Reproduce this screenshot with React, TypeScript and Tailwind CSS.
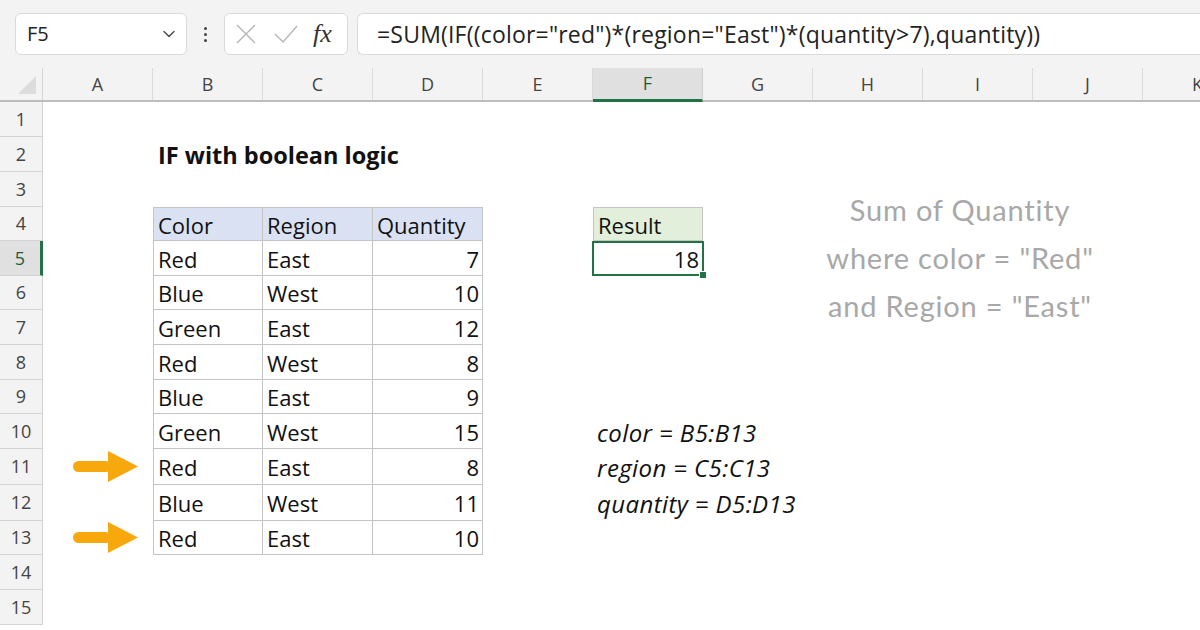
import React from "react";
import { ChevronDown } from "lucide-react";

const COLS = ["A", "B", "C", "D", "E", "F", "G", "H", "I", "J", "K"];

// row heights in px, rows 1..15
const ROW_H: Record<number, string> = {
  1: "h-[35px]",
  2: "h-[35px]",
  3: "h-[35px]",
  4: "h-[34px]",
  5: "h-[35px]",
  6: "h-[34px]",
  7: "h-[35px]",
  8: "h-[35px]",
  9: "h-[34px]",
  10: "h-[35px]",
  11: "h-[36px]",
  12: "h-[36px]",
  13: "h-[34px]",
  14: "h-[35px]",
  15: "h-[35px]",
};

const DATA: [string, string, number][] = [
  ["Red", "East", 7],
  ["Blue", "West", 10],
  ["Green", "East", 12],
  ["Red", "West", 8],
  ["Blue", "East", 9],
  ["Green", "West", 15],
  ["Red", "East", 8],
  ["Blue", "West", 11],
  ["Red", "East", 10],
];

const NOTES: Record<number, string> = {
  10: "color = B5:B13",
  11: "region = C5:C13",
  12: "quantity = D5:D13",
};

function Arrow() {
  return (
    <svg width="66" height="32" viewBox="0 0 66 32" aria-hidden>
      <rect x="0" y="10" width="38" height="11" rx="5.5" fill="#f7a80d" />
      <polygon points="35,0 65,15.5 35,31" fill="#f7a80d" />
    </svg>
  );
}

function Toolbar() {
  return (
    <div className="flex h-[68px] shrink-0 items-center gap-0 bg-[#f3f3f3] pl-[15px]">
      <div className="flex h-[42px] w-[172px] items-center justify-between rounded-md border border-[#dadada] bg-white pl-[11px] pr-[7px]">
        <span className="text-[20px] text-[#222]">F5</span>
        <ChevronDown className="h-5 w-5 text-[#444]" strokeWidth={1.6} />
      </div>
      <div className="flex w-[37px] flex-col items-center gap-[3px]">
        <span className="h-[3px] w-[3px] rounded-full bg-[#444]" />
        <span className="h-[3px] w-[3px] rounded-full bg-[#444]" />
        <span className="h-[3px] w-[3px] rounded-full bg-[#444]" />
      </div>
      <div className="flex h-[42px] w-[124px] items-center rounded-md border border-[#dadada] bg-white">
        <svg width="22" height="22" viewBox="0 0 22 22" className="ml-[10px]" aria-hidden>
          <path d="M2 2 L20 20 M20 2 L2 20" stroke="#b8b8b8" strokeWidth="1.5" fill="none" />
        </svg>
        <svg width="26" height="22" viewBox="0 0 26 22" className="ml-[16px]" aria-hidden>
          <path d="M2 11 L10 19 L24 3" stroke="#b8b8b8" strokeWidth="1.5" fill="none" />
        </svg>
        <span className="ml-[14px] font-['Liberation_Serif',serif] text-[26px] italic leading-none text-[#333]">
          fx
        </span>
      </div>
      <div className="ml-[9px] flex h-[42px] flex-1 items-center rounded-l-md border border-r-0 border-[#dadada] bg-white pl-[19px]">
        <span className="whitespace-nowrap pt-[1px] text-[23px] tracking-[0.2px] text-[#222]">
          =SUM(IF((color="red")*(region="East")*(quantity&gt;7),quantity))
        </span>
      </div>
    </div>
  );
}

function ColumnHeader() {
  return (
    <div className="flex h-[34px] shrink-0 border-b-2 border-[#bdbdbd] bg-[#f3f3f3]">
      <div className="relative w-[43px] shrink-0 border-r border-[#d4d4d4]">
        <svg width="20" height="20" viewBox="0 0 20 20" className="absolute bottom-[5px] right-[5px]" aria-hidden>
          <polygon points="19,1 19,19 1,19" fill="#dcdcdc" />
        </svg>
      </div>
      {COLS.map((c) => (
        <div
          key={c}
          className={
            c === "F"
              ? "-mb-[2px] flex w-[110px] shrink-0 items-center justify-center border-b-[3px] border-r border-r-[#cfcfcf] border-b-[#217346] bg-[#e0e0e0] text-[18px] text-[#1d5e38]"
              : "flex w-[110px] shrink-0 items-center justify-center border-r border-[#dadada] text-[18px] text-[#444]"
          }
        >
          {c}
        </div>
      ))}
    </div>
  );
}

function cellContent(row: number, col: string): React.ReactNode {
  if (row === 2 && col === "B")
    return <span className="whitespace-nowrap pl-[5px] text-[23.5px] font-bold text-[#111]">IF with boolean logic</span>;
  if (row === 4) {
    if (col === "B") return <span className="pl-[4px]">Color</span>;
    if (col === "C") return <span className="pl-[4px]">Region</span>;
    if (col === "D") return <span className="pl-[4px]">Quantity</span>;
    if (col === "F") return <span className="pl-[4px]">Result</span>;
  }
  if (row >= 5 && row <= 13) {
    const d = DATA[row - 5];
    if (col === "B") return <span className="pl-[4px]">{d[0]}</span>;
    if (col === "C") return <span className="pl-[4px]">{d[1]}</span>;
    if (col === "D") return <span className="ml-auto pr-[3px]">{d[2]}</span>;
    if (col === "A" && (row === 11 || row === 13))
      return (
        <span className="-mt-[2px] pl-[30px]">
          <Arrow />
        </span>
      );
  }
  if (row === 5 && col === "F") return <span className="ml-auto pr-[3px]">18</span>;
  if (NOTES[row] && col === "F")
    return <span className="whitespace-nowrap pl-[4px] text-[24px] italic tracking-[0.4px]">{NOTES[row]}</span>;
  return null;
}

function cellClass(row: number, col: string): string {
  const base = "flex w-[110px] shrink-0 items-center pt-[2px]";
  const inTable = row >= 4 && row <= 13 && (col === "B" || col === "C" || col === "D");
  if (inTable) {
    let cls = base + " border-b border-r border-[#c4c4c4]";
    if (col === "B") cls += " border-l";
    if (row === 4) cls += " border-t bg-[#d9e1f2]";
    return cls;
  }
  if (row === 4 && col === "F") return base + " border border-[#c4c4c4] bg-[#e2efda]";
  if (row === 5 && col === "F") return base + " relative border-2 border-[#217346] -ml-[1px] w-[112px]";
  if (row === 5 && col === "G") return "flex w-[109px] shrink-0 items-center";
  return base;
}

function Row({ n }: { n: number }) {
  const selected = n === 5;
  return (
    <div className={`flex shrink-0 ${ROW_H[n]}`}>
      <div
        className={
          selected
            ? "flex w-[43px] shrink-0 items-center justify-center border-b border-r-[3px] border-b-[#d4d4d4] border-r-[#217346] bg-[#e0e0e0] text-[18px] text-[#1d5e38]"
            : "flex w-[43px] shrink-0 items-center justify-center border-b border-r border-[#d4d4d4] bg-[#f3f3f3] text-[18px] text-[#444]"
        }
      >
        {n}
      </div>
      {COLS.map((c) => (
        <div key={c} className={cellClass(n, c)}>
          {cellContent(n, c)}
          {n === 5 && c === "F" && (
            <span className="absolute -bottom-[5px] -right-[5px] h-[8px] w-[8px] border border-white bg-[#217346]" />
          )}
        </div>
      ))}
    </div>
  );
}

export default function App() {
  const rows = Array.from({ length: 15 }, (_, i) => i + 1);
  return (
    <div className="flex h-[630px] w-[1200px] flex-col overflow-hidden bg-white font-['Open_Sans',sans-serif] text-[#111]">
      <Toolbar />
      <ColumnHeader />
      <div className="relative flex flex-col text-[22px]">
        {rows.map((n) => (
          <Row key={n} n={n} />
        ))}
        {/* floating text box */}
        <div className="absolute left-[780px] top-[84px] w-[360px] text-center font-['Lato',sans-serif] text-[29px] leading-[48px] tracking-[0.8px] text-[#a8a8a8]">
          <div>Sum of Quantity</div>
          <div>where color = "Red"</div>
          <div>and Region = "East"</div>
        </div>
      </div>
    </div>
  );
}
